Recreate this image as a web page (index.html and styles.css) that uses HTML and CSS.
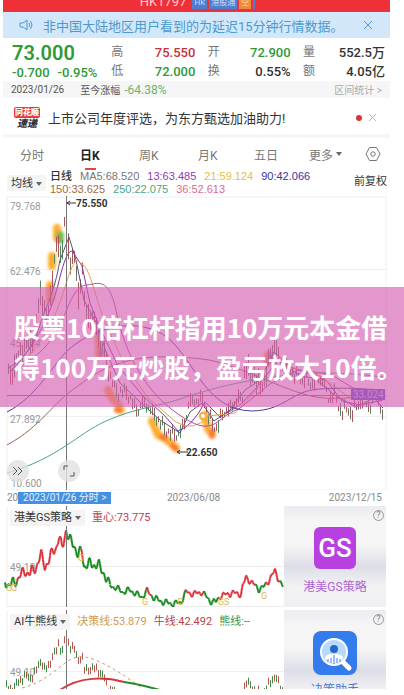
FILE: index.html
```
<!DOCTYPE html>
<html lang="zh-CN">
<head>
    <meta charset="UTF-8">
    <meta name="viewport" content="width=device-width, initial-scale=1.0">
    <title>HK1797 日K</title>
    <link rel="stylesheet" href="styles.css">
</head>
<body>

<div class="page">
    <header class="topbar">
        <span class="code">HK1797</span>
        <span class="tag">HK</span>
        <span class="tag">港股通</span>
        <span class="tag orange">空</span>
        <span class="tag thin"></span>
    </header>

    <div class="notice">
        <svg class="speaker" viewBox="0 0 14 12" width="14" height="12">
            <path d="M1 4h3l4-3v10L4 8H1zM10 4q1.500 2 0 4M11.500 2q3 4 0 8"/>
        </svg>
        <span class="notice-text">非中国大陆地区用户看到的为延迟15分钟行情数据。</span>
        <button class="close" aria-label="关闭">
            <svg viewBox="0 0 8 8" width="8" height="8"><path d="M0 0L8 8M8 0L0 8"/></svg>
        </button>
    </div>

    <section class="quote">
        <div class="price">
            <strong>73.000</strong>
            <div class="change"><span>-0.700</span><span>-0.95%</span></div>
        </div>
        <dl>
            <div><dt>高</dt><dd class="up">75.550</dd></div>
            <div><dt>低</dt><dd class="down">72.000</dd></div>
        </dl>
        <dl>
            <div><dt>开</dt><dd class="down">72.900</dd></div>
            <div><dt>换</dt><dd>0.55%</dd></div>
        </dl>
        <dl>
            <div><dt>量</dt><dd>552.5万</dd></div>
            <div><dt>额</dt><dd>4.05亿</dd></div>
        </dl>
    </section>

    <div class="range">
        <span>2023/01/26</span>
        <span class="range-label">至今涨幅</span>
        <span class="range-value">-64.38%</span>
        <a href="#">区间统计 &gt;</a>
    </div>

    <div class="news">
        <div class="news-logo"><b>同花顺</b><i>速递</i></div>
        <a href="#">上市公司年度评选，为东方甄选加油助力!</a>
        <span class="dot"></span>
        <button class="close grey" aria-label="关闭">
            <svg viewBox="0 0 8 8" width="7" height="7"><path d="M0 0L8 8M8 0L0 8"/></svg>
        </button>
    </div>

    <nav class="tabs">
        <button>分时</button>
        <button class="active">日K</button>
        <button>周K</button>
        <button>月K</button>
        <button>五日</button>
        <button>更多<span class="caret"></span></button>
        <button aria-label="设置">
            <svg viewBox="0 0 16 16" width="16" height="16">
                <path d="M4.500 1.500h7L15 8l-3.500 6.500h-7L1 8z"/><circle cx="8" cy="8" r="2.200"/>
            </svg>
        </button>
    </nav>

    <div class="ma">
        <button class="picker">均线<span class="caret"></span></button>
        <div class="ma-values">
            <div><b>日线</b><span class="ma5">MA5:68.520</span><span class="ma13">13:63.485</span><span class="ma21">21:59.124</span><span class="ma90">90:42.066</span></div>
            <div><span class="ma150">150:33.625</span><span class="ma250">250:22.075</span><span class="ma36">36:52.613</span></div>
        </div>
        <button class="adjust">前复权</button>
    </div>

    <section class="chart">
        <svg viewBox="3 196 387 294">
            <defs>
                <filter id="soft" x="-50%" y="-50%" width="200%" height="200%"><feGaussianBlur stdDeviation="1.500"/></filter>
            </defs>
            <path class="grid" d="M7 196V490M386 196V490M7 197H386M7 269.500H386M7 343H386M7 416.500H386M7 490H386"/>
            <g class="axis">
                <text x="10" y="210">79.768</text>
                <text x="10" y="275">62.476</text>
                <text x="10" y="347">45.184</text>
                <text x="10" y="423">27.892</text>
                <text x="11" y="487">10.600</text>
            </g>
            <g class="glow" filter="url(#soft)">
                <path d="M52 256v10M57 228v10"/>
                <path class="green" d="M60 235v5"/>
                <path d="M50 285v15M99 335v20M108 390l4 8 6 6 3 6M152 421l6 14 8 4 10 9M205 415l3 14 4 5M268 355v8"/>
                <path class="hot" d="M101 352v2M117 410h2M162 437l2 1M173 446l3 3M212 432v4M270 355v6"/>
            </g>
            <g id="candles"></g>
            <g class="lines">
                <path class="ma5" d="M8 368C24 360 34 345 40 325S54 295 60 260L69 237L76 260L84 300L98 326L106 352L120 383L138 400L160 420L180 433L190 412L202 403L214 421L230 410L245 390L260 380L274 352L290 367L310 374L336 396L356 407L374 398L383 408"/>
                <path class="ma13" d="M10 372C38 342 50 315 58 285Q67 246 73 252L82 266L90 303L100 328L118 366L144 397L164 415L178 431Q192 427 205 402L220 417L240 405L258 386L278 360L300 376L326 380L342 401L360 405L383 400"/>
                <path class="ma21" d="M12 372C42 347 54 322 65 287S77 261 82 264C91 268 96 304 108 329L126 367L148 398L176 422Q194 433 208 416L235 413L262 384L288 366L320 376L350 398L383 397"/>
                <path class="ma36" d="M15 370C47 351 56 336 67 309S84 286 93 284S111 283 117 315C129 366 152 398 184 418S216 416 239 409L270 384L298 370L330 374L358 391L383 393"/>
                <path class="ma90" d="M7 412C36 397 50 369 66 352C92 327 139 315 168 338C196 362 205 410 252 411C287 410 289 391 320 389S360 389 383 390"/>
                <path class="ma150" d="M7 445C42 426 52 403 78 386C117 355 155 354 202 359C240 363 290 396 324 398S360 394 383 390"/>
                <path class="ma250" d="M7 473C59 458 77 434 106 421S160 406 180 399C230 382 260 379 288 375S350 373 383 377"/>
            </g>
            <path class="cursor" d="M66.500 196V490M7 395.500H386"/>
            <rect class="last" x="351" y="389" width="34" height="11"/>
            <text class="last-text" x="353" y="398">33.024</text>
            <circle class="signal" cx="203" cy="416" r="3"/>
            <g class="peak">
                <path d="M76 203H67M70 201l-3 2 3 2M188 452H177M180 450l-3 2 3 2"/>
                <text x="76" y="207">75.550</text>
                <text x="186" y="456">22.650</text>
            </g>
        </svg>
        <button class="round more" aria-label="展开">
            <svg viewBox="0 0 12 10" width="12" height="10"><path d="M1 1l4 4-4 4M6 1l4 4-4 4"/></svg>
        </button>
        <button class="round full" aria-label="全屏">
            <svg viewBox="0 0 12 12" width="12" height="12"><path d="M1 5V1h4M11 7v4H7"/></svg>
        </button>
        <div class="banner">
            <h1>股票10倍杠杆指用10万元本金借<br>得100万元炒股，盈亏放大10倍。</h1>
        </div>
    </section>

    <div class="dates">
        <div class="date-start">
            <span>20</span>
            <button>2023/01/26 分时 &gt;</button>
        </div>
        <span>2023/06/08</span>
        <span class="date-end">2023/12/15</span>
    </div>

    <section class="panel">
        <div class="plot">
            <svg viewBox="3 506 281 101">
                <path class="grid" d="M7 506V607M7 566.500H284M7 606.500H284"/>
                <text class="axis" x="10" y="571">49.10</text>
                <g id="gs"></g>
                <g class="marks">
                    <text x="6" y="591">G</text><text x="11" y="591">G</text><text x="78" y="561">G</text>
                    <text x="142" y="605">G</text><text x="177" y="605">G</text><text x="218" y="605">G</text><text x="224" y="605">S</text><text x="261" y="599">G</text>
                </g>
                <path class="cursor" d="M66.500 506V607"/>
            </svg>
            <div class="panel-head">
                <button class="picker">港美GS策略<span class="caret"></span></button>
                <span class="red">重心:73.775</span>
            </div>
        </div>
        <a class="promo" href="#">
            <span class="help">?</span>
            <span class="gs-icon">GS</span>
            <span class="gs-name">港美GS策略</span>
        </a>
    </section>

    <section class="panel last-panel">
        <div class="plot">
            <svg viewBox="3 610 281 101">
                <path class="grid" d="M7 610V711M7 671.500H284"/>
                <text class="axis" x="10" y="676">49.10</text>
                <g id="bull"></g>
                <path class="decision" d="M22 688C45 682 56 669 68 661S91 658 102 663S122 674 142 688"/>
                <path class="bull-line" d="M60 690C80 676 105 677 124 682"/>
                <path class="bear-line" d="M124 682C138 684 149 687 160 690"/>
                <path class="cursor" d="M66.500 610V711"/>
            </svg>
            <div class="panel-head">
                <button class="picker">AI牛熊线<span class="caret"></span></button>
                <span class="gold">决策线:53.879</span>
                <span class="red">牛线:42.492</span>
                <span class="green">熊线:--</span>
            </div>
        </div>
        <a class="promo" href="#">
            <span class="help">?</span>
            <svg class="ai-icon" viewBox="0 0 44 44" width="44" height="44">
                <rect width="44" height="44" rx="8" fill="#347cec"/>
                <path d="M30 31l6 6" stroke="#fff" stroke-width="5" stroke-linecap="round"/>
                <circle cx="21" cy="21" r="13" fill="#b8dafa" stroke="#fff" stroke-width="2"/>
                <path d="M12 28q0-5 7-5h4q7 0 7 5-9 9-18 0" fill="#fff"/>
                <circle cx="21" cy="18" r="4" fill="#2568c8"/>
                <path d="M15 31v-3M18 32v-5M21 33v-9M24 32v-5M27 31v-3" stroke="#347cec"/>
            </svg>
            <span class="ai-name">决策助手</span>
        </a>
    </section>
</div>

<script src="chart.js"></script>
</body>
</html>
```
FILE: styles.css
```
* {
    box-sizing: border-box;
}
body {
    margin: 0;
    background-color: white;
    color: #333;
    font-family: Roboto, "Noto Sans CJK SC", sans-serif;
    font-size: 12px;
    overflow-x: hidden;
}
button {
    padding: 0;
    border: none;
    background: none;
    color: inherit;
    font: inherit;
    cursor: pointer;
}
a {
    color: inherit;
    text-decoration: none;
}
svg {
    display: block;
    fill: none;
}
.page {
    padding: 0 14px 0 3px;
}

/* header */
.topbar {
    display: flex;
    justify-content: center;
    align-items: flex-end;
    gap: 2px;
    height: 12px;
    padding: 0 0 3px 2px;
    overflow: hidden;
    background-color: #ee3038;
    color: #ffd0d0;
}
.code {
    margin-right: 4px;
    font-size: 13px;
    line-height: 14px;
}
.tag {
    padding: 0 2px;
    background-color: #4f7fd0;
    color: #c9dcfa;
    font-size: 8px;
    line-height: 12px;
}
.orange {
    background-color: #f08a3c;
    color: #ffe0b0;
}
.thin {
    width: 2px;
    height: 12px;
    padding: 0;
}
.notice {
    display: flex;
    align-items: center;
    height: 26px;
    padding: 0 18px 0 16px;
    background-color: #d3e7fb;
    color: #4b9bcd;
    font-size: 13px;
}
.speaker {
    margin-right: 10px;
    stroke: #4b9bcd;
}
.notice-text {
    flex: 1;
    white-space: nowrap;
}
.close {
    stroke: #4b9bcd;
}
.grey {
    stroke: #aaa;
}

/* quote */
.quote {
    display: grid;
    grid-template-columns: 87px 84px 83px 82px;
    justify-content: space-between;
    padding: 5px 5px 0 9px;
    font-size: 13px;
    font-weight: 500;
    line-height: 19px;
}
.price {
    color: #2f9a35;
}
.price strong {
    display: block;
    font-size: 20px;
    font-weight: 600;
    line-height: 21px;
}
.change {
    display: flex;
    gap: 8px;
    line-height: 17px;
}
dl {
    margin: 0;
}
dl div {
    display: flex;
    justify-content: space-between;
}
dt {
    color: #777;
    font-size: 12px;
    font-weight: 400;
}
dd {
    margin: 0;
}
.up {
    color: #c9313a;
}
.down {
    color: #2f9a35;
}
.range {
    display: flex;
    align-items: center;
    height: 17px;
    margin-bottom: 3px;
    padding: 0 8px;
    background-color: #f6f6f6;
    color: #555;
    font-size: 10px;
}
.range span:first-child {
    font-size: 10px;
}
.range-label {
    margin: 0 4px 0 16px;
}
.range-value {
    color: #6bb56d;
    font-size: 12px;
}
.range a {
    margin-left: auto;
    color: #aaa;
}

/* news */
.news {
    display: flex;
    align-items: center;
    height: 37px;
    padding: 0 14px 0 11px;
    border-bottom: 4px solid #f6f6f6;
    font-size: 13px;
}
.news a {
    margin-left: 8px;
    white-space: nowrap;
}
.news-logo {
    width: 26px;
    text-align: center;
    font-size: 10px;
    font-weight: 900;
    line-height: 11px;
}
.news-logo b {
    display: block;
    border-radius: 2px;
    background-color: #e23b40;
    color: white;
    font-size: 8px;
}
.dot {
    width: 6px;
    height: 6px;
    margin: 0 7px 0 auto;
    border-radius: 50%;
    background-color: #dc343c;
}

/* tabs */
.tabs {
    display: grid;
    grid-template-columns: 60fr 59fr 59fr 56fr 55fr 56fr 16fr;
    height: 32px;
    padding: 0 9px 0 17px;
    color: #777;
}
.tabs button {
    position: relative;
    display: flex;
    align-items: center;
    white-space: nowrap;
}
.tabs svg {
    flex: none;
    stroke: #777;
}
.tabs .active {
    color: #222;
    font-weight: 700;
}
.active::after {
    content: "";
    position: absolute;
    bottom: 0;
    left: 5px;
    width: 11px;
    height: 2px;
    background-color: #e2454c;
}
.caret {
    display: inline-block;
    margin-left: 3px;
    border: 3px solid transparent;
    border-top: 4px solid #666;
    border-bottom: 0;
    vertical-align: middle;
}

/* moving averages */
.ma {
    display: flex;
    align-items: flex-start;
    height: 26px;
    padding: 0 3px 0 4px;
    font-family: "Liberation Sans", "Noto Sans CJK SC", sans-serif;
    font-size: 11px;
}
.ma .picker {
    margin-top: 5px;
}
.picker {
    height: 16px;
    padding: 0 4px;
    background-color: #f4f4f4;
    font-size: 11px;
    line-height: 16px;
    white-space: nowrap;
}
.ma-values {
    flex: 1;
    padding-left: 4px;
    line-height: 13px;
    white-space: nowrap;
}
.ma-values div {
    display: flex;
    gap: 8px;
}
.ma-values b {
    font-weight: 500;
}
.ma-values .ma5 { color: #777; }
.ma-values .ma13 { color: #9038bd; }
.ma-values .ma21 { color: #dfc04b; }
.ma-values .ma90 { color: #35359a; }
.ma-values .ma150 { color: #a3683f; }
.ma-values .ma250 { color: #48a588; }
.ma-values .ma36 { color: #dc6b91; }
.adjust {
    margin-top: 4px;
    line-height: 14px;
}

/* main chart */
.chart {
    position: relative;
}
.chart > svg,
.plot > svg {
    width: 100%;
}
.grid { stroke: #eee; }
.axis {
    fill: #999;
    font-size: 10px;
}
.cursor { stroke: #777; }
.lines path { stroke-width: 1; }
.lines .ma5 { stroke: #557; }
.lines .ma13 { stroke: #8134b2; }
.lines .ma21 { stroke: #e0a744; }
.lines .ma36 { stroke: #b54a9b; }
.lines .ma90 { stroke: #4a3c94; }
.lines .ma150 { stroke: #966452; }
.lines .ma250 { stroke: #48a588; }
.glow {
    stroke: #ffae31;
    stroke-width: 8;
    stroke-linejoin: round;
    stroke-linecap: round;
}
.glow .green { stroke: #78bb48; }
.glow .hot {
    stroke: #fa7a2c;
    stroke-width: 6;
}
.last { fill: #4a50c8; }
.last-text {
    fill: #bcc4ff;
    font-size: 10px;
}
.signal {
    fill: white;
    stroke: #f4b13c;
    stroke-width: 2;
}
.peak { stroke: #333; }
.peak text {
    fill: #333;
    stroke: none;
    font-size: 10px;
    font-weight: 700;
}
.round {
    position: absolute;
    bottom: 8px;
    display: flex;
    justify-content: center;
    align-items: center;
    width: 22px;
    height: 22px;
    border-radius: 50%;
    background-color: rgba(225, 225, 225, 0.8);
    stroke: #555;
}
.more { left: 4px; }
.full { left: 55px; }
.banner {
    position: absolute;
    top: 91px;
    left: -3px;
    right: -14px;
    padding: 20px 0 20px 14px;
    overflow: hidden;
    background-color: rgba(213, 95, 178, 0.65);
}
h1 {
    margin: 0;
    color: white;
    font-family: "Noto Sans CJK SC", sans-serif;
    font-size: 26px;
    font-weight: 700;
    line-height: 40px;
    white-space: nowrap;
}
.dates {
    display: grid;
    grid-template-columns: 160fr 115fr 100fr;
    align-items: center;
    height: 16px;
    padding: 0 8px 0 4px;
    color: #888;
    font-size: 10px;
    line-height: 12px;
}
.date-start {
    display: flex;
}
.dates button {
    width: 93px;
    background-color: #4691df;
    color: #e3f1ff;
    white-space: nowrap;
}
.date-end {
    text-align: right;
}

/* indicator panels */
.panel {
    display: grid;
    grid-template-columns: 281fr 102fr;
    padding-right: 4px;
    margin-bottom: 3px;
}
.last-panel {
    height: 79px;
    margin-bottom: 0;
    overflow: hidden;
}
.plot {
    position: relative;
}
.panel-head {
    position: absolute;
    top: 4px;
    left: 7px;
    display: flex;
    gap: 7px;
    font-size: 11px;
    line-height: 16px;
    white-space: nowrap;
}
.red { color: #bd3e4b; }
.gold { color: #d19b4c; }
.green { color: #3c923f; }
.marks {
    fill: #e3b751;
    font-size: 9px;
}
.decision {
    stroke: #c7a060;
    stroke-dasharray: 3 3;
}
.bull-line {
    stroke: #d9353e;
    stroke-width: 2;
}
.bear-line {
    stroke: #25882c;
    stroke-width: 2;
}
.promo {
    position: relative;
    display: flex;
    flex-direction: column;
    align-items: center;
    padding-top: 21px;
    background: linear-gradient(#ececf1, #f5f5f6 15%, #f5f5f6 38%, #dedee9 60%, #f2f2f4 80%, #f0f0f2);
    white-space: nowrap;
}
.help {
    position: absolute;
    top: 4px;
    right: 2px;
    width: 11px;
    height: 11px;
    border: 1px solid #999;
    border-radius: 50%;
    color: #888;
    font-size: 9px;
    line-height: 9px;
    text-align: center;
}
.gs-icon {
    width: 42px;
    height: 42px;
    border-radius: 6px;
    background-color: #b83fe0;
    color: white;
    font-size: 26px;
    font-weight: 500;
    line-height: 42px;
    text-align: center;
}
.gs-name {
    margin-top: 9px;
    color: #b064d2;
    line-height: 18px;
}
.ai-icon {
    flex: none;
}
.ai-name {
    margin-top: 6px;
    color: #3f7fd4;
    line-height: 18px;
}
```
FILE: chart.js
```
const NS = 'http://www.w3.org/2000/svg';

const price = [
    [8,366],[12,378],[16,362],[22,350],[28,345],[34,335],[38,310],[41,290],[44,312],[48,315],
    [52,285],[54,268],[57,240],[60,250],[62,262],[64,225],[66,218],[68,242],[71,265],[75,255],
    [78,300],[82,268],[86,315],[96,322],[100,350],[104,350],[108,370],[113,385],[118,393],
    [126,392],[138,412],[143,402],[152,412],[158,420],[165,430],[172,434],[178,436],[186,420],
    [189,402],[204,400],[208,415],[213,427],[217,428],[222,415],[230,408],[237,400],[243,398],
    [245,360],[250,378],[255,375],[260,390],[264,382],[268,365],[274,344],[276,350],[282,365],
    [290,370],[300,380],[305,378],[310,385],[318,380],[324,380],[328,400],[334,392],[338,408],
    [352,413],[358,405],[364,400],[370,408],[374,395],[380,400],[383,423]
];

const trend = [
    [5,581],[9,585],[14,583],[20,576],[25,571],[30,574],[36,567],[41,555],[45,566],[49,561],
    [53,550],[56,548],[59,538],[62,548],[66,530],[69,540],[74,544],[78,556],[82,550],[84,566],
    [90,564],[98,565],[104,573],[109,585],[116,588],[123,592],[130,590],[136,594],[142,597],
    [147,591],[154,598],[163,602],[174,604],[181,602],[186,592],[194,594],[202,592],[210,601],
    [216,602],[220,596],[232,593],[241,594],[243,586],[246,577],[252,583],[259,589],[264,587],
    [269,580],[275,571],[280,582],[283,587]
];

// value between the two nearest points
function valueAt(points, x) {
    for (let i = 1; i < points.length; i++) {
        if (x <= points[i][0]) {
            const a = points[i - 1];
            const b = points[i];
            return a[1] + (b[1] - a[1]) * (x - a[0]) / (b[0] - a[0]);
        }
    }
    return points[points.length - 1][1];
}

function noise(x) {
    return Math.sin(x * 12.9) * Math.cos(x * 5.3);
}

function addPath(parent, d, color, width) {
    const path = document.createElementNS(NS, 'path');
    path.setAttribute('d', d);
    path.setAttribute('stroke', color);
    path.setAttribute('stroke-width', width);
    parent.appendChild(path);
}

// main candles
const candles = document.getElementById('candles');
for (let x = 8.5; x <= 384; x += 2) {
    const y = valueAt(price, x) + noise(x) * 5;
    const range = x < 110 || (x > 243 && x < 280) ? 11 : 6;
    const high = y - range * (0.4 + Math.abs(noise(x + 1)));
    const low = y + range * (0.3 + Math.abs(noise(x + 2)));
    const color = noise(x * 3) > 0 ? '#a9555a' : (noise(x * 7) > 0 ? '#55875c' : '#756b60');
    addPath(candles, `M${x} ${high}V${low}`, color, 1);
}

const gs = document.getElementById('gs');
for (let x = 5; x < 283; x++) {
    const size = x < 110 ? 7 : 4;
    const y1 = valueAt(trend, x) + noise(x) * size;
    const y2 = valueAt(trend, x + 1) + noise(x + 1) * size;
    const red = (x > 16 && x < 68) || (x > 80 && x < 83) || (x > 145 && x < 151) ||
        (x > 184 && x < 204) || (x > 218 && x < 256) || (x > 264 && x < 279);
    addPath(gs, `M${x} ${y1}L${x + 1} ${y2}`, red ? '#dc343c' : '#198c21', 2);
}

// thin candles of the bull and bear panel
const bull = document.getElementById('bull');
for (let x = 6.5; x < 284; x += 2) {
    const y = valueAt(trend, x) + 105 + noise(x) * 4;
    addPath(bull, `M${x} ${y - 4}V${y + 3}`, noise(x * 3) > 0 ? '#b65550' : '#3f8847', 1);
}
```
